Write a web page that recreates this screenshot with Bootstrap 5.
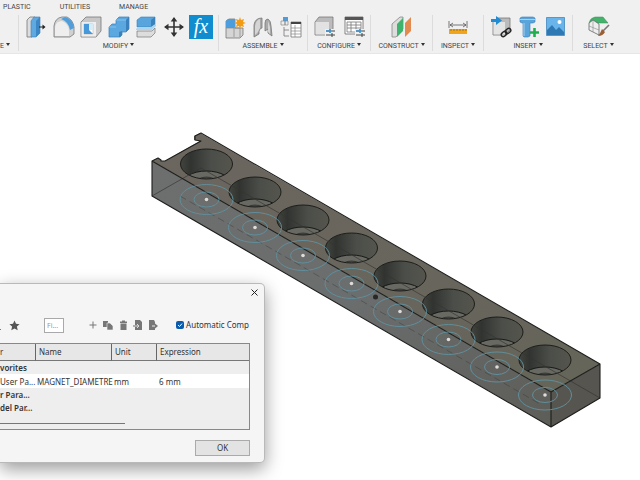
<!DOCTYPE html>
<html lang="en">
<head>
<meta charset="utf-8">
<meta name="viewport" content="width=device-width, initial-scale=1">
<title>Change Parameters</title>
<link href="https://cdn.jsdelivr.net/npm/bootstrap@5.3.0/dist/css/bootstrap.min.css" rel="stylesheet">
<style>
body{font-family:Roboto,"Liberation Sans",sans-serif;background:#fff;color:#444}
.ribbon{background:#f0f0f0;border-bottom:1px solid #e6e6e6}
.tabs{gap:29px;padding:2px 3px 0;font-size:7px;line-height:10px}
.tabs a{color:#444}
.tools{display:grid;grid-template-columns:19px 200px 89px 63px 62px 51px 89px 51px;padding:3px 0 2px}
.tool-group{border-right:1px solid #dcdcdc;padding:0 4px;min-width:0}
.tool-group:last-child{border-right:0}
.tool-group.wide{padding:0 5px}
.tool{border:0;background:none;padding:0;width:24px;height:24px;line-height:0}
.tool svg{width:24px;height:24px}
.menu-label{border:0;background:none;padding:0;margin-top:2px;font-size:7px;line-height:10px;color:#444;white-space:nowrap}
.menu-label::after{content:"";display:inline-block;border:2px solid transparent;border-top:3px solid #333;border-bottom:0;margin-left:2px;vertical-align:2px}
.viewport{min-height:0}
.viewport>svg{width:100%;height:auto}
.dialog-win{left:0;bottom:17px;width:265px;background:#f5f5f5;border:1px solid #b9b9b9;border-left:0;border-radius:0 5px 5px 0;box-shadow:0 6px 18px rgba(0,0,0,.4);font-family:"Noto Sans","Open Sans",sans-serif;font-size:8px;line-height:12px;color:#333}
.close-x{border:0;background:none;padding:4px 5px;line-height:0}
.bar{padding:16px 15px 10px 0;height:42px}
.bar button{border:0;background:none;padding:0;line-height:0}
.filter{width:20px;height:15px;border:1px solid #a9a9a9;background:#fff;font-size:7px;padding:0 2px;border-radius:0;color:#777}
.filter::placeholder{color:#999}
.auto input{appearance:none;width:8px;height:8px;margin:0;border-radius:2px;background:#0b5cad url("data:image/svg+xml,%3Csvg xmlns='http://www.w3.org/2000/svg' viewBox='0 0 8 8'%3E%3Cpath d='M2 4l1.500 1.500L6 2.600' fill='none' stroke='white'/%3E%3C/svg%3E")}
.grid-box{margin-right:14px;border:1px solid #888;border-left:0;background:#eee;padding-bottom:5px}
.grid-box table{table-layout:fixed;border-collapse:separate;border-spacing:0}
.grid-box th{font-weight:400;background:#e7e7e7;height:17px;padding:0 3px;border-bottom:1px solid #777;border-right:1px solid #666}
.grid-box th:last-child{border-right:0}
.grid-box td{height:13px;padding:0 0 0 2px;line-height:13px;white-space:nowrap}
.grid-box th:first-child,.grid-box td:first-child{padding-left:0}
.grid-box .entry td{background:#fff;height:14px}
.grid-box .entry td:nth-child(2){padding-left:1px}
.group-name{font-weight:600}
.scroll-thumb{width:50%;height:1px;background:#777;margin-top:9px}
.ok{width:55px;height:16px;border:1px solid #aaa;background:#e3e3e3;font-size:8px;line-height:12px;padding:0;color:#333}
</style>
<script src="https://cdn.jsdelivr.net/npm/bootstrap@5.3.0/dist/js/bootstrap.bundle.min.js"></script>
</head>
<body class="vh-100 d-flex flex-column overflow-hidden position-relative">
<header class="ribbon">
<nav class="tabs d-flex"><a class="text-decoration-none" href="#">PLASTIC</a><a class="text-decoration-none" href="#">UTILITIES</a><a class="text-decoration-none" href="#">MANAGE</a></nav>
<div class="tools">
<div class="tool-group d-flex flex-column justify-content-end px-0"><button class="menu-label text-start">E</button></div>

<div class="tool-group wide d-flex flex-column align-items-center">
<div class="d-flex justify-content-between w-100">
<button class="tool" aria-label="Press pull"><svg viewBox="0 0 24 24"><path d="M3 5l3-3h5v17l-3 3H3z" fill="#ddd" stroke="#777" stroke-width=".8"/><path d="M7 6l3-4h6v16l-4 4H7z" fill="#5fa8e0" stroke="#3b7cb5" stroke-width=".6"/><path d="M12 6l4-4v16l-4 4z" fill="#3c87c5"/><path d="M15 12h5" stroke="#222"/><path d="M18.500 9.500L21.500 12l-3 2.500z" fill="#222"/></svg></button>
<button class="tool" aria-label="Fillet"><svg viewBox="0 0 24 24"><path d="M2 22V11Q3 3 10 2h5q6 3 7 10v7l-4 3z" fill="#d0d0d0" stroke="#777" stroke-width=".8"/><path d="M3 21V12q1-6 7-6 7 3 7 10v5z" fill="#eee"/><path d="M9 4l4-2q8 2 9 11l-4 2Q17 7 9 4z" fill="#4f9edb"/></svg></button>
<button class="tool" aria-label="Shell"><svg viewBox="0 0 24 24"><path d="M2 7l5-5h15v14l-5 6H2z" fill="#c8c8c8" stroke="#777" stroke-width=".8"/><path d="M2.500 7H17v14.500H2.500z" fill="#eee"/><path d="M5 9h9v10H5z" fill="#fff" stroke="#aaa" stroke-width=".5"/><path d="M5 9v10h9l-4-4V9z" fill="#4798d8"/><path d="M10 9h4v6h-4z" fill="#d7ebf8"/></svg></button>
<button class="tool" aria-label="Combine"><svg viewBox="0 0 24 24"><path d="M9 5l3-3h10v12l-3 3h-4v3l-2 2H2V12l3-3h4z" fill="#5ba7df" stroke="#3980b8" stroke-width=".7"/><path d="M19 5l3-3v12l-3 3zM12 17l3-1v4l-2 2h-1z" fill="#3b82bd"/><path d="M9 5h10M2 12h7" stroke="#9dcef0" stroke-width=".7"/></svg></button>
<button class="tool" aria-label="Split body"><svg viewBox="0 0 24 24"><path d="M3 5l4-3h14v7l-4 3H3z" fill="#58a4dd" stroke="#3980b8" stroke-width=".6"/><path d="M17 5l4-3v7l-4 3z" fill="#3b82bd"/><path d="M2 14l2-2h13l5-3v2l-4 4H2z" fill="#a9d5f2"/><path d="M3 16h15l3-3v5l-4 4H3z" fill="#ddd" stroke="#777" stroke-width=".7"/></svg></button>
<button class="tool" aria-label="Move"><svg viewBox="0 0 24 24"><path d="M12 3v18M3 12h18" stroke="#333" stroke-width="1.600"/><path d="M12 2l3.300 4.500H8.700zM12 22l3.300-4.500H8.700zM2 12l4.500-3.300v6.600zM22 12l-4.500-3.300v6.600z" fill="#333"/></svg></button>
<button class="tool" aria-label="Change parameters"><svg class="overflow-visible" viewBox="0 0 24 24"><path d="M0 0h24v24H0z" fill="#0f8dcf"/><text x="12" y="18" text-anchor="middle" font-family="Liberation Serif,serif" font-style="italic" font-size="20" fill="#fff">fx</text></svg></button>
</div><button class="menu-label">MODIFY</button></div>

<div class="tool-group d-flex flex-column align-items-center">
<div class="d-flex justify-content-between w-100">
<button class="tool" aria-label="New component"><svg viewBox="0 0 24 24"><path d="M3 6l3-2h6v9h8v7l-3 3H3z" fill="#d5d5d5" stroke="#777" stroke-width=".8"/><path d="M3 6l2-2h7v8l-1 1H3z" fill="#4b9ddd"/><path d="M11 13v9M3 13h14v9" fill="none" stroke="#888" stroke-width=".7"/><path d="M17 2l1 3 3-1-1 3 3 1-3 1 1 3-3-1-1 3-1-3-3 1 1-3-3-1 3-1-1-3 3 1z" fill="#f29b13"/></svg></button>
<button class="tool" aria-label="Joint"><svg viewBox="0 0 24 24"><path d="M3 10q1-7 8-7v10q-2 0-3 3v3l-5 3zM14 8q0-4 3-4 3 2 3 7l1 10-4-3v-4l-3 2z" fill="#aaa" stroke="#777" stroke-width=".8"/><path d="M4 11q1-6 5-7v9l-2 4-3 3zM17 6l2 6v7l-2-2z" fill="#d5d5d5"/></svg></button>
<button class="tool" aria-label="Bill of materials"><svg viewBox="0 0 24 24"><path d="M4 2h5v4H4z" fill="#4b9ddd"/><path d="M2 6h4v4H2zM6 6h3v4H6z" fill="#eee" stroke="#888" stroke-width=".7"/><path d="M5 12v9h5M5 15h5" fill="none" stroke="#777" stroke-width=".8"/><path d="M12 7h10v15H12z" fill="#fff" stroke="#777" stroke-width=".8"/><path d="M12 7h10v2H12z" fill="#444"/><path d="M12 13h10M12 16h10M12 19h10M16 10v12" stroke="#888" stroke-width=".7"/></svg></button>
</div><button class="menu-label">ASSEMBLE</button></div>

<div class="tool-group d-flex flex-column align-items-center">
<div class="d-flex justify-content-between w-100">
<button class="tool" aria-label="Configure model"><svg viewBox="0 0 24 24"><path d="M3 7l4-5h14v14l-4 4H3z" fill="#bbb" stroke="#777" stroke-width=".8"/><path d="M3.500 7H17v12.500H3.500z" fill="#e2e2e2"/><path d="M13 14h10v8H13z" fill="#f0f0f0"/><path d="M14 16h9M14 20h9" stroke="#444"/><path d="M18 14v4M14 16h4" stroke="#3e94d4" stroke-width="1.700"/><path d="M20 18v4" stroke="#444"/></svg></button>
<button class="tool" aria-label="Configuration table"><svg viewBox="0 0 24 24"><path d="M3 2h18v17H3z" fill="#fff" stroke="#666" stroke-width=".8"/><path d="M3 2h18v3H3z" fill="#555"/><path d="M5 7h14v10H5zM5 10h14M5 13h14M9 7v10M14 7v10" fill="none" stroke="#777" stroke-width=".8"/><path d="M13 14h10v8H13z" fill="#f0f0f0"/><path d="M14 16h9M14 20h9" stroke="#444"/><path d="M18 14v4M14 16h4" stroke="#3e94d4" stroke-width="1.700"/><path d="M20 18v4" stroke="#444"/></svg></button>
</div><button class="menu-label">CONFIGURE</button></div>

<div class="tool-group d-flex flex-column align-items-center"><button class="tool" aria-label="Offset plane"><svg viewBox="0 0 24 24"><path d="M2 9l8-7h3v12l-7 8H2z" fill="#ddd" stroke="#888" stroke-width=".8"/><path d="M7 9l6-6v13l-6 6z" fill="#3cb46d"/><path d="M15 8l6-6v14l-6 6z" fill="#e28b50"/></svg></button><button class="menu-label">CONSTRUCT</button></div>

<div class="tool-group d-flex flex-column align-items-center"><button class="tool" aria-label="Measure"><svg viewBox="0 0 24 24"><path d="M3 6v7M21 6v7M4 10h16M7 8l-3 2 3 2M17 8l3 2-3 2" fill="none" stroke="#555" stroke-width=".8"/><path d="M3 14h18v5H3z" fill="#f0a51c"/><path d="M5 14v2M8 14v2M11 14v2M14 14v2M17 14v2M20 14v2" stroke="#8b5b08" stroke-width=".7"/></svg></button><button class="menu-label">INSPECT</button></div>

<div class="tool-group d-flex flex-column align-items-center">
<div class="d-flex justify-content-between w-100">
<button class="tool" aria-label="Insert derive"><svg viewBox="0 0 24 24"><path d="M5 7l4-4h13v12l-5 5H5z" fill="#bbb" stroke="#777" stroke-width=".8"/><path d="M5.500 7H17v12.500H5.500z" fill="#e4e4e4"/><path d="M3 4h5V1l6 4.500L8 10V7H3z" fill="#218bd3"/><g fill="none" stroke="#222" stroke-width="1.400"><rect x="13" y="17" width="6" height="4" rx="2" transform="rotate(-40 16 19)"/><rect x="17" y="14" width="6" height="4" rx="2" transform="rotate(-40 20 16)"/></g></svg></button>
<button class="tool" aria-label="Insert fastener"><svg viewBox="0 0 24 24"><path d="M4 3l2-1h11l2 1v4l-2 1h-3v13l-2 1H8l-1-1V8H6L4 7z" fill="#5aa4dc" stroke="#3b7cb5" stroke-width=".6"/><path d="M4 4.500h15M8 8v13" stroke="#a6d2f0"/><path d="M18.500 13v9M14 17.500h9" stroke="#1fae4f" stroke-width="2.600"/></svg></button>
<button class="tool" aria-label="Insert image"><svg viewBox="0 0 24 24"><path d="M2.500 2.500h18v18h-18z" fill="#69b5eb" stroke="#4388bd" stroke-width=".8"/><path d="M3 15l5-5 4 5 3-3 5 5v3H3z" fill="#2e79b4"/><circle cx="15.500" cy="7" r="2" fill="#fff"/></svg></button>
</div><button class="menu-label">INSERT</button></div>

<div class="tool-group d-flex flex-column align-items-center"><button class="tool" aria-label="Select"><svg viewBox="0 0 24 24"><path d="M2 8q1-5 6-6h8l5 6H10z" fill="#43b36c" stroke="#388d58" stroke-width=".5"/><path d="M2 8l4-3 6 4v11L2 15z" fill="#eee" stroke="#666" stroke-width=".8"/><path d="M6 5v12M2 11l10 4" fill="none" stroke="#888" stroke-width=".6"/><path d="M22 10l-6 6" stroke="#777" stroke-width="1.600"/><path d="M15 14l3 3q-2 4-7 4 2-2 4-7z" fill="#9a5f34"/></svg></button><button class="menu-label">SELECT</button></div>
</div>
</header>

<main class="viewport flex-grow-1">
<svg viewBox="0 55 640 426" role="img" aria-label="Magnet holder block">
<defs>
<linearGradient id="topFace" x1="0" y1="0" x2="1" y2="1"><stop offset="0" stop-color="#6b665f"/><stop offset="1" stop-color="#66655a"/></linearGradient>
<linearGradient id="frontFace" x1="0" y1="0" x2="1" y2="1"><stop offset="0" stop-color="#6d6e6d"/><stop offset=".5" stop-color="#6b6e6e"/><stop offset="1" stop-color="#5d5d58"/></linearGradient>
<linearGradient id="bore"><stop offset="0" stop-color="#42443f"/><stop offset=".2" stop-color="#30332f"/><stop offset=".6" stop-color="#4b4e49"/><stop offset="1" stop-color="#55554d"/></linearGradient>
<clipPath id="mouth"><ellipse rx="26" ry="15"/></clipPath>
<g id="pocket"><ellipse rx="26" ry="15" fill="url(#bore)"/><g clip-path="url(#mouth)"><ellipse cy="22" rx="26" ry="15" fill="#696963" stroke="#181a17"/><ellipse cy="21" rx="12" ry="8" fill="#4c4d49" stroke="#292a27" stroke-width=".7"/></g><ellipse rx="26" ry="15" fill="none" stroke="#1c1d1a"/></g>
<g id="sketch"><ellipse rx="26.500" ry="15" fill="none" stroke="#608e9b"/><ellipse rx="12.500" ry="7.500" fill="none" stroke="#608e9b"/><circle r="1.800" fill="#deddda"/></g>
</defs>
<path d="M152 162l6-3 3 2v1l4 0 35-20-6-1v-4l6-3 400 231-49 28z" fill="url(#topFace)"/>
<path d="M152 162l399 231v35L152 197z" fill="url(#frontFace)"/>
<path d="M551 393l49-28v34l-49 29z" fill="#56554f"/>
<use href="#pocket" x="206.500" y="165"/><use href="#pocket" x="255" y="193"/><use href="#pocket" x="303" y="221"/><use href="#pocket" x="351.500" y="249"/><use href="#pocket" x="400" y="277"/><use href="#pocket" x="448.500" y="305"/><use href="#pocket" x="497" y="333"/><use href="#pocket" x="545" y="361"/>
<path d="M152 197l49-28 399 230" fill="none" stroke="#353632" stroke-width=".9" opacity=".75"/>
<path d="M180 197l360 208" fill="none" stroke="#3a3d3b" stroke-width=".8" stroke-dasharray="7 4" opacity=".6"/>
<path d="M152 162l6-3 3 2v1l4 0 36-20-6-1v-4l6-3 399 231v34l-49 29-399-231zM152 162l399 231v35M551 393l49-28" fill="none" stroke="#1d1e1c" stroke-width="1.100" stroke-linejoin="round"/>
<use href="#sketch" x="206.500" y="200.500"/><use href="#sketch" x="255" y="228.500"/><use href="#sketch" x="303" y="256.500"/><use href="#sketch" x="351.500" y="284.500"/><use href="#sketch" x="400" y="312.500"/><use href="#sketch" x="448.500" y="340.500"/><use href="#sketch" x="497" y="368"/><use href="#sketch" x="545" y="396"/>
<circle cx="375.500" cy="298" r="2.500" fill="#272927"/>
</svg>
</main>

<section class="dialog-win position-absolute" role="dialog" aria-label="Parameters">
<div class="d-flex justify-content-end"><button class="close-x" aria-label="Close"><svg width="9" height="9" viewBox="0 0 9 9"><path d="M1.500 1.500l6 6M7.500 1.500l-6 6" stroke="#222"/></svg></button></div>
<div class="bar d-flex align-items-center">
<button aria-label="Unit link"><svg width="9" height="12" viewBox="0 0 9 12"><path d="M0 10.500h1" stroke="#2a9c9c"/></svg></button>
<button aria-label="Favorite"><svg width="11" height="11" viewBox="0 0 11 11"><path d="M5.500 .5l1.500 3.300 3.600.4-2.700 2.400.8 3.600-3.200-1.800-3.200 1.800.8-3.600L.4 4.200 4 3.800z" fill="#555"/></svg></button>
<input class="filter ms-4" type="text" placeholder="Fi..." aria-label="Filter">
<div class="d-flex ms-4" style="gap:5px">
<button aria-label="Add"><svg width="10" height="10" viewBox="0 0 10 10"><path d="M5 1.500v7M1.500 5h7" stroke="#777"/></svg></button>
<button aria-label="Copy"><svg width="10" height="10" viewBox="0 0 10 10"><path d="M0 1h5v6H0z" fill="#777"/><path d="M4 3h3l3 3v4H4z" fill="#777" stroke="#f5f5f5" stroke-width=".6"/></svg></button>
<button aria-label="Delete"><svg width="10" height="10" viewBox="0 0 10 10"><path d="M2 1.500h2V.500h3v1h2V3H2zM2.500 3.500h6V10h-6z" fill="#777"/></svg></button>
<button aria-label="Import"><svg width="10" height="10" viewBox="0 0 10 10"><path d="M2 0h5l2 2v8H2z" fill="#777"/><path d="M0 6h6M4 4l2 2-2 2" fill="none" stroke="#ddd"/><path d="M0 6h2" stroke="#777"/></svg></button>
<button aria-label="Export"><svg width="10" height="10" viewBox="0 0 10 10"><path d="M1 0h5l1 2v8H1z" fill="#777"/><path d="M4 6h3" stroke="#eee"/><path d="M7 3.500L10 6 7 8.500z" fill="#777"/></svg></button>
</div>
<div class="auto d-flex align-items-center ms-auto text-nowrap"><input type="checkbox" id="auto" checked><label for="auto" style="padding-left:2px">Automatic Comp</label></div>
</div>
<div class="grid-box">
<table class="w-100">
<colgroup><col style="width:36px"><col style="width:76px"><col style="width:45px"><col></colgroup>
<thead><tr><th>r</th><th>Name</th><th>Unit</th><th>Expression</th></tr></thead>
<tbody>
<tr><td class="group-name" colspan="4">vorites</td></tr>
<tr class="entry"><td>User Pa...</td><td>MAGNET_DIAMETRE</td><td>mm</td><td>6 mm</td></tr>
<tr><td class="group-name" colspan="4">r Para...</td></tr>
<tr><td class="group-name" colspan="4">del Par...</td></tr>
</tbody>
</table>
<div class="scroll-thumb"></div>
</div>
<div class="d-flex justify-content-end" style="padding:10px 14px 6px"><button class="ok">OK</button></div>
</section>
</body>
</html>
